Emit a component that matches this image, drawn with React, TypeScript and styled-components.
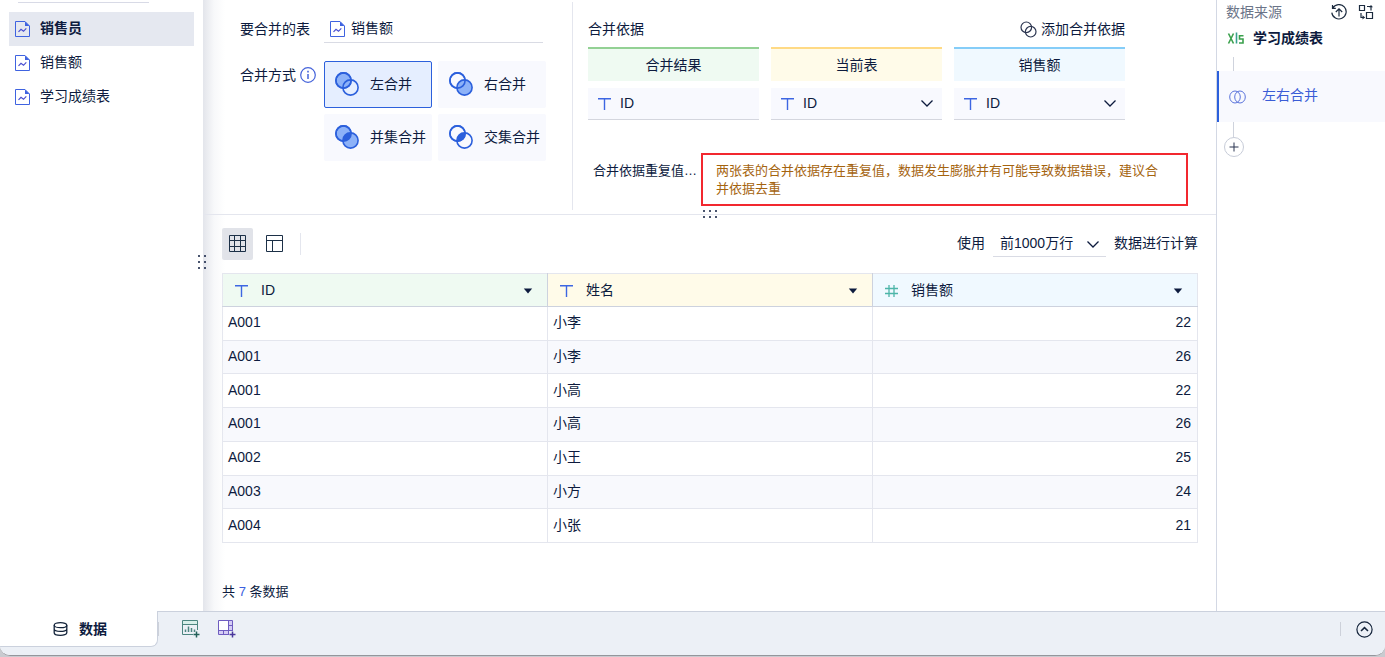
import React, { useState } from 'react';
import styled, { createGlobalStyle } from 'styled-components';

const color = {
  text: '#0d1b3e',
  muted: '#6b7488',
  line: '#e4e6ee',
  strongLine: '#cdd2de',
  primary: '#2c60dc',
  field: '#f8f9fe',
};

const GlobalStyle = createGlobalStyle`
  *, *::before, *::after { box-sizing: border-box; }
  body {
    margin: 0;
    background: #c9cbd0;
    color: ${color.text};
    font: 14px/20px "Liberation Sans", "Noto Sans CJK SC", sans-serif;
  }
  button, input, select { font: inherit; color: inherit; }
  button { border: 0; padding: 0; background: none; cursor: pointer; }
  svg { display: block; flex: none; }
`;

const Shell = styled.div`
  display: flex;
  flex-direction: column;
  min-height: calc(100vh - 1px);
  margin-bottom: 1px;
  border-bottom: 1px solid #94969c;
  border-radius: 0 0 10px 10px;
  background: #fff;
  overflow: hidden;
`;

const Workspace = styled.div`
  display: flex;
  flex: 1;
`;

const Sidebar = styled.nav`
  position: relative;
  flex: 0 0 203px;
  padding: 2px 9px 0;

  &::after {
    content: '';
    position: absolute;
    top: 0;
    bottom: 0;
    left: 100%;
    width: 22px;
    background: linear-gradient(to right, #e3e5eb, rgba(240, 242, 245, 0.5) 50%, rgba(255, 255, 255, 0));
    pointer-events: none;
  }
`;

const SidebarRule = styled.div`
  height: 1px;
  margin: 0 45px 9px 9px;
  background: #d8dae6;
`;

const TableItem = styled.button<{ $active?: boolean }>`
  display: flex;
  align-items: center;
  gap: 10px;
  width: 100%;
  max-width: 185px;
  height: 34px;
  padding: 0 6px 2px;
  background: ${p => (p.$active ? '#e5e8f0' : 'transparent')};
  font-weight: ${p => (p.$active ? 700 : 400)};

  svg { margin-top: 2px; }
`;

const Grip = styled.div<{ $columns: number }>`
  position: absolute;
  z-index: 2;
  display: grid;
  grid-template-columns: repeat(${p => p.$columns}, 2px);
  gap: 4px;

  i {
    width: 2px;
    height: 2px;
    border-radius: 1px;
    background: ${color.text};
  }
`;

const SideGrip = styled(Grip)`
  right: -3px;
  top: 255px;
`;

const BottomGrip = styled(Grip)`
  bottom: -4px;
  left: 50%;
  transform: translateX(-50%);
`;

const Main = styled.main`
  flex: 1;
  min-width: 0;
`;

const MergePanel = styled.section`
  position: relative;
  display: flex;
  border-bottom: 1px solid ${color.line};
`;

const ModePane = styled.div`
  display: grid;
  grid-template-columns: 78px 222px;
  column-gap: 6px;
  row-gap: 18px;
  align-content: start;
  flex: 0 0 370px;
  margin: 2px 0 4px;
  padding: 13px 0 0 37px;
  border-right: 1px solid ${color.line};
`;

const PaneLabel = styled.div`
  display: flex;
  align-items: center;
  gap: 4px;
  height: 27px;
`;

const TablePicker = styled.button`
  display: flex;
  align-items: center;
  gap: 6px;
  width: 219px;
  height: 28px;
  padding: 0 6px 1px;
  border-bottom: 1px solid #d9dbe4;

  svg { margin-top: 1px; }
`;

const ModeGrid = styled.div`
  display: grid;
  grid-template-columns: 108px 108px;
  gap: 6px;
`;

const ModeButton = styled.button<{ $active?: boolean }>`
  display: flex;
  align-items: center;
  gap: 10px;
  height: 47px;
  padding: 0 0 1px 9px;
  border: 1px solid ${p => (p.$active ? color.primary : color.field)};
  border-radius: 2px;
  background: ${p => (p.$active ? '#e5eeff' : color.field)};
  white-space: nowrap;
`;

const BasisPane = styled.div`
  flex: 1;
  min-width: 0;
  padding: 19px 28px 8px 15px;
`;

const BasisHead = styled.div`
  display: flex;
  justify-content: space-between;
  align-items: center;
  margin: 0 63px 8px 0;
`;

const AddButton = styled.button`
  display: flex;
  align-items: center;
  gap: 4px;
`;

const BasisGrid = styled.div`
  display: grid;
  grid-template-columns: repeat(3, minmax(0, 1fr));
  gap: 7px 12px;
  margin-right: 63px;
`;

const BasisTitle = styled.div<{ $bar: string; $fill: string }>`
  height: 34px;
  border-top: 2px solid ${p => p.$bar};
  background: ${p => p.$fill};
  line-height: 32px;
  text-align: center;
`;

const Field = styled.label`
  position: relative;
  display: flex;
  align-items: center;
  height: 32px;
  padding: 0 9px;
  border-bottom: 1px solid #d4d6de;
  background: ${color.field};

  input, select {
    flex: 1;
    min-width: 0;
    height: 31px;
    padding: 0 0 2px 8px;
    border: 0;
    outline: 0;
    background: none;
    appearance: none;
  }
`;

const Chevron = styled.svg`
  position: absolute;
  right: 8px;
  top: 50%;
  margin-top: -8px;
  pointer-events: none;
`;

const DuplicateRow = styled.div`
  display: flex;
  align-items: flex-start;
  gap: 4px;
  margin-top: 33px;
  padding-left: 5px;
  font-size: 13px;
  line-height: 18px;
`;

const DuplicateLabel = styled.div`
  flex: 0 0 104px;
  padding-top: 9px;
  white-space: nowrap;
`;

const Warning = styled.div`
  flex: 1;
  min-height: 53px;
  padding: 7px 20px 6px 13px;
  border: 2px solid #f2282f;
  color: #a5640f;
`;

const Preview = styled.section`
  padding: 13px 18px 9px 19px;
`;

const Toolbar = styled.div`
  display: flex;
  align-items: center;
  height: 32px;
  margin-bottom: 13px;
`;

const ViewButton = styled.button<{ $active?: boolean }>`
  display: grid;
  place-items: center;
  width: 31px;
  height: 32px;
  margin-right: 6px;
  padding-bottom: 2px;
  border-radius: 2px;
  background: ${p => (p.$active ? '#e1e3e9' : 'transparent')};
`;

const ToolbarRule = styled.div`
  width: 1px;
  height: 22px;
  margin-left: 4px;
  background: ${color.line};
`;

const Limit = styled.label`
  display: flex;
  align-items: center;
  gap: 8px;
  margin: 0 0 2px auto;
`;

const LimitSelect = styled.span`
  position: relative;
  width: 113px;
  height: 28px;
  border-bottom: 1px solid #d9dbe4;

  select {
    width: 100%;
    height: 27px;
    padding: 0 0 0 7px;
    border: 0;
    outline: 0;
    background: none;
    appearance: none;
  }

  svg {
    right: 6px;
    margin-top: -6px;
  }
`;

const DataTable = styled.table`
  width: 100%;
  height: 270px;
  border-collapse: collapse;
  table-layout: fixed;

  th, td {
    padding: 0 6px 2px 5px;
    border: 1px solid ${color.line};
  }
  th {
    height: 33px;
    padding: 0 14px 1px 11px;
    border-right-color: ${color.strongLine};
    border-bottom-color: ${color.strongLine};
    font-weight: 400;
  }
  th:last-child { border-right-color: ${color.line}; }
  tbody tr:nth-child(even) { background: #f8f9fd; }
`;

const HeadCell = styled.th<{ $fill: string }>`
  background: ${p => p.$fill};
`;

const HeadContent = styled.div`
  display: flex;
  align-items: center;
  gap: 12px;

  svg { margin-top: 2px; }
`;

const MenuButton = styled.button`
  margin-left: auto;
`;

const NumberCell = styled.td`
  text-align: right;
`;

const Count = styled.div`
  margin-top: 39px;
  font-size: 13px;
  b { color: #3c5fe0; font-weight: 400; }
`;

const Steps = styled.aside`
  flex: 0 0 169px;
  border-left: 1px solid #d3d8e4;
`;

const StepsHead = styled.div`
  display: flex;
  align-items: center;
  gap: 11px;
  padding: 2px 11px 0 9px;
  color: ${color.muted};

  span { flex: 1; }
`;

const Source = styled.div`
  display: flex;
  align-items: center;
  gap: 8px;
  margin: 6px 0 9px;
  padding-left: 10px;
  font-weight: 700;
`;

const Connector = styled.div`
  width: 1px;
  height: 15px;
  margin-left: 16px;
  background: #cfd3dd;
`;

const Step = styled.button`
  display: flex;
  align-items: center;
  gap: 16px;
  width: 100%;
  height: 51px;
  margin-top: -1px;
  padding: 0 0 3px 10px;
  border-left: 2px solid ${color.primary};
  background: ${color.field};
  color: #3a5cd6;

  svg { margin-top: 3px; }
`;

const AddStep = styled.button`
  display: grid;
  place-items: center;
  width: 20px;
  height: 20px;
  margin-left: 7px;
  border: 1px solid #c7ccd8;
  border-radius: 50%;
`;

const BottomBar = styled.footer`
  position: relative;
  display: flex;
  align-items: flex-start;
  height: 44px;
  background: #ecf0f6;
  box-shadow: inset 0 1px #cbd1dd;
`;

const DataTab = styled.button`
  display: flex;
  align-items: center;
  gap: 11px;
  width: 158px;
  height: 36px;
  padding: 0 0 0 53px;
  border: solid #cbd1dd;
  border-width: 0 1px 1px 0;
  border-radius: 0 0 7px 0;
  background: #fff;
  font-weight: 700;
`;

const BarRule = styled.div`
  width: 1px;
  height: 14px;
  margin-top: 11px;
  background: #cdd1da;
`;

const BarTools = styled.div`
  display: flex;
  gap: 18px;
  padding: 9px 0 0 23px;
`;

const BarEnd = styled.div`
  display: flex;
  gap: 15px;
  margin-left: auto;
  padding-right: 12px;

  button { margin: 10px 0 0; }
`;

const ReportIcon = () => (
  <svg width="15" height="16" viewBox="0 0 15 16" fill="none" stroke="#3f63e0">
    <path d="M.5.5H10L14.500 5V15.500H.5Z" />
    <path d="M10 .5V5H14.500Z" fill="#3f63e0" stroke="none" />
    <path d="M3.500 10.800 6 8.300 8.500 10.300 11.300 7.300" stroke="#4a4fd0" strokeWidth="1.200" />
  </svg>
);

const TextIcon = () => (
  <svg width="15" height="14" viewBox="0 0 15 14" fill="none" stroke="#3d66e2" strokeWidth="1.400">
    <path d="M1 1.800H14M7.500 2V13" />
  </svg>
);

const HashIcon = () => (
  <svg width="15" height="14" viewBox="0 0 15 14" fill="none" stroke="#4cb5a8" strokeWidth="1.300">
    <path d="M1 4.500H14M1 9.500H14M5 1V13M10 1V13" />
  </svg>
);

const ChevronIcon = () => (
  <Chevron width="14" height="14" viewBox="0 0 14 14" fill="none" stroke={color.text} strokeWidth="1.300">
    <path d="M1.500 4.500 7 10 12.500 4.500" />
  </Chevron>
);

type Mode = 'left' | 'right' | 'union' | 'inner';

const MergeIcon = ({ mode }: { mode: Mode }) => {
  const first = mode === 'left' || mode === 'union' ? '#8db2f8' : 'none';
  const second = mode === 'right' || mode === 'union' ? '#8db2f8' : 'none';
  const lens = mode === 'union' || mode === 'inner' ? '#2c60dc' : 'none';
  return (
    <svg width="26" height="26" viewBox="0 0 26 26" stroke="#2c60dc" strokeWidth="1.600">
      <circle cx="9.500" cy="9.500" r="7.600" fill={first} />
      <circle cx="16.500" cy="16.500" r="7.600" fill={second} />
      <path d="M17 9.000A7.600 7.600 0 0 1 9.000 17A7.600 7.600 0 0 1 17 9.000Z" fill={lens} stroke="none" />
      <circle cx="9.500" cy="9.500" r="7.600" fill="none" />
    </svg>
  );
};

const LinkIcon = () => (
  <svg width="17" height="17" viewBox="0 0 17 17" fill="none" stroke="#2b3550" strokeWidth="1.200">
    <circle cx="6.300" cy="6.300" r="5.300" />
    <circle cx="10.700" cy="10.700" r="5.300" />
  </svg>
);

const InfoIcon = () => (
  <svg width="16" height="16" viewBox="0 0 16 16" fill="none" stroke="#4563da" strokeWidth="1.200">
    <circle cx="8" cy="8" r="7.300" />
    <path d="M8 7V12" strokeWidth="1.500" />
    <path d="M8 3.800V5.400" strokeWidth="1.600" />
  </svg>
);

const GridIcon = () => (
  <svg width="17" height="17" viewBox="0 0 17 17" fill="none" stroke="#1c3047">
    <path d="M.5.5H16.500V16.500H.5ZM.5 5.500H16.500M.5 11.500H16.500M5.500.5V16.500M11.500.5V16.500" />
  </svg>
);

const LayoutIcon = () => (
  <svg width="17" height="17" viewBox="0 0 17 17" fill="none" stroke="#1c3047">
    <path d="M.5.5H16.500V16.500H.5ZM.5 5.500H16.500M6.500 5.500V16.500" />
  </svg>
);

const CaretIcon = () => (
  <svg width="10" height="6" viewBox="0 0 10 6" fill={color.text}>
    <path d="M.8.5H9.200L5 5.600Z" />
  </svg>
);

const HistoryIcon = () => (
  <svg width="16" height="16" viewBox="0 0 16 16" fill="none" stroke="#1c2b3f" strokeWidth="1.200">
    <path d="M1.500 1V4.300H4.800M1.700 4.200A7.200 7.200 0 1 1 .8 8.600" />
    <path d="M8 12.500V5M4.800 8 8 4.800 11.200 8" />
  </svg>
);

const SwapIcon = () => (
  <svg width="16" height="16" viewBox="0 0 16 16" fill="none" stroke="#1c2b3f" strokeWidth="1.200">
    <path d="M1.500 1.500H6.500V6.500H1.500ZM8.500 8.500H14.500V14.500H8.500Z" />
    <path d="M9 2.500H13V6.500M6.500 13.500H3V9" />
    <path d="M11 .5 9 2.500 11 4.500M4.500 11.500 6.500 13.500 4.500 15.500" strokeWidth="0" />
    <path d="M11 3.200 13 1 15 3.200ZM4.500 11.300 7 13.500 4.500 15.600Z" fill="#1c2b3f" stroke="none" />
  </svg>
);

const XlsIcon = () => (
  <svg width="18" height="14" viewBox="0 0 18 14" fill="none" strokeWidth="1.600">
    <path d="M1.500 2.500 6.500 12.500M6.500 2.500 1.500 12.500" stroke="#3aa04c" />
    <path d="M9.500 1.500V12.500" stroke="#39a08e" />
    <path d="M16.500 4.700H12.500V8H16V12H12" stroke="#3aa04c" />
  </svg>
);

const JoinIcon = () => (
  <svg width="17" height="14" viewBox="0 0 17 14" fill="none" stroke="#5b74dc">
    <ellipse cx="6" cy="7" rx="5.300" ry="6" />
    <ellipse cx="11" cy="7" rx="5.300" ry="6" />
  </svg>
);

const PlusIcon = () => (
  <svg width="10" height="10" viewBox="0 0 10 10" stroke="#2b3550">
    <path d="M.5 5H9.500M5 .5V9.500" />
  </svg>
);

const DatabaseIcon = () => (
  <svg width="15" height="14" viewBox="0 0 15 14" fill="none" stroke="#13233a" strokeWidth="1.300">
    <ellipse cx="7.500" cy="3.200" rx="6.300" ry="2.500" />
    <path d="M1.200 3.200V10.800C1.200 14.200 13.800 14.200 13.800 10.800V3.200M1.200 7C1.200 10.200 13.800 10.200 13.800 7" />
  </svg>
);

const AddChartIcon = () => (
  <svg width="18" height="18" viewBox="0 0 18 18" fill="none" stroke="#4c8580">
    <path d="M1 1H15V4H1Z" fill="#d8efea" stroke="none" />
    <path d="M11 14.500H.5V.5H15.500V10M.5 4.500H15.500" />
    <path d="M3.500 12V9.500M6.500 12V6.500M9.500 12V8M12.500 12V9.500" strokeWidth="1.500" />
    <path d="M11.500 14.500H17.500M14.500 11.500V17.500" stroke="#23605a" strokeWidth="1.500" />
  </svg>
);

const AddBoardIcon = () => (
  <svg width="18" height="18" viewBox="0 0 18 18" fill="none" stroke="#6e5cc0">
    <path d="M10 1H14V10H10ZM1 10H10V14H1Z" fill="#d5cdf5" stroke="none" />
    <path d="M1 1H10V10H1Z" fill="#fff" stroke="none" />
    <path d="M11 14.500H.5V.5H14.500V11M.5 10.500H14.500M10.500.5V14.500M10.500 5.500H14.500M5.500 10.500V14.500" />
    <path d="M11.500 14.500H17.500M14.500 11.500V17.500" stroke="#4a379c" strokeWidth="1.500" />
  </svg>
);

const CollapseIcon = () => (
  <svg width="17" height="17" viewBox="0 0 17 17" fill="none" stroke="#13233a" strokeWidth="1.200">
    <circle cx="8.500" cy="8.500" r="7.600" />
    <path d="M5 10 8.500 6.600 12 10" strokeWidth="1.500" />
  </svg>
);

const tables = ['销售员', '销售额', '学习成绩表'];

const modes: { id: Mode; label: string }[] = [
  { id: 'left', label: '左合并' },
  { id: 'right', label: '右合并' },
  { id: 'union', label: '并集合并' },
  { id: 'inner', label: '交集合并' },
];

const columns = [
  { title: 'ID', fill: '#effaf2', icon: <TextIcon /> },
  { title: '姓名', fill: '#fffbe9', icon: <TextIcon /> },
  { title: '销售额', fill: '#f0f9ff', icon: <HashIcon /> },
];

const rows: [string, string, number][] = [
  ['A001', '小李', 22],
  ['A001', '小李', 26],
  ['A001', '小高', 22],
  ['A001', '小高', 26],
  ['A002', '小王', 25],
  ['A003', '小方', 24],
  ['A004', '小张', 21],
];

const dots = Array.from({ length: 6 }, (_, i) => <i key={i} />);

export default function App() {
  const [table, setTable] = useState(tables[0]);
  const [mode, setMode] = useState<Mode>('left');

  return (
    <>
      <GlobalStyle />
      <Shell>
        <Workspace>
          <Sidebar>
            <SidebarRule />
            {tables.map(name => (
              <TableItem key={name} $active={name === table} onClick={() => setTable(name)}>
                <ReportIcon />
                {name}
              </TableItem>
            ))}
            <SideGrip $columns={2}>{dots}</SideGrip>
          </Sidebar>

          <Main>
            <MergePanel>
              <ModePane>
                <PaneLabel>要合并的表</PaneLabel>
                <TablePicker>
                  <ReportIcon />
                  销售额
                </TablePicker>
                <PaneLabel>
                  合并方式
                  <InfoIcon />
                </PaneLabel>
                <ModeGrid>
                  {modes.map(m => (
                    <ModeButton
                      key={m.id}
                      $active={m.id === mode}
                      aria-pressed={m.id === mode}
                      onClick={() => setMode(m.id)}
                    >
                      <MergeIcon mode={m.id} />
                      {m.label}
                    </ModeButton>
                  ))}
                </ModeGrid>
              </ModePane>

              <BasisPane>
                <BasisHead>
                  <span>合并依据</span>
                  <AddButton>
                    <LinkIcon />
                    添加合并依据
                  </AddButton>
                </BasisHead>
                <BasisGrid>
                  <BasisTitle $bar="#93d194" $fill="#effaf2">合并结果</BasisTitle>
                  <BasisTitle $bar="#ffda85" $fill="#fffbe9">当前表</BasisTitle>
                  <BasisTitle $bar="#85cdf8" $fill="#f0f9ff">销售额</BasisTitle>
                  <Field>
                    <TextIcon />
                    <input aria-label="合并结果" defaultValue="ID" />
                  </Field>
                  <Field>
                    <TextIcon />
                    <select aria-label="当前表">
                      <option>ID</option>
                    </select>
                    <ChevronIcon />
                  </Field>
                  <Field>
                    <TextIcon />
                    <select aria-label="销售额">
                      <option>ID</option>
                    </select>
                    <ChevronIcon />
                  </Field>
                </BasisGrid>
                <DuplicateRow>
                  <DuplicateLabel>合并依据重复值…</DuplicateLabel>
                  <Warning role="alert">
                    两张表的合并依据存在重复值，数据发生膨胀并有可能导致数据错误，建议合并依据去重
                  </Warning>
                </DuplicateRow>
              </BasisPane>
              <BottomGrip $columns={3}>{dots}</BottomGrip>
            </MergePanel>

            <Preview>
              <Toolbar>
                <ViewButton $active aria-label="表格"><GridIcon /></ViewButton>
                <ViewButton aria-label="布局"><LayoutIcon /></ViewButton>
                <ToolbarRule />
                <Limit>
                  使用
                  <LimitSelect>
                    <select>
                      <option>前1000万行</option>
                    </select>
                    <ChevronIcon />
                  </LimitSelect>
                  数据进行计算
                </Limit>
              </Toolbar>
              <DataTable>
                <thead>
                  <tr>
                    {columns.map(c => (
                      <HeadCell key={c.title} $fill={c.fill}>
                        <HeadContent>
                          {c.icon}
                          {c.title}
                          <MenuButton aria-label={c.title}><CaretIcon /></MenuButton>
                        </HeadContent>
                      </HeadCell>
                    ))}
                  </tr>
                </thead>
                <tbody>
                  {rows.map(([id, name, amount], i) => (
                    <tr key={i}>
                      <td>{id}</td>
                      <td>{name}</td>
                      <NumberCell>{amount}</NumberCell>
                    </tr>
                  ))}
                </tbody>
              </DataTable>
              <Count>共 <b>7</b> 条数据</Count>
            </Preview>
          </Main>

          <Steps>
            <StepsHead>
              <span>数据来源</span>
              <button aria-label="历史"><HistoryIcon /></button>
              <button aria-label="替换"><SwapIcon /></button>
            </StepsHead>
            <Source>
              <XlsIcon />
              学习成绩表
            </Source>
            <Connector />
            <Step>
              <JoinIcon />
              左右合并
            </Step>
            <Connector />
            <AddStep aria-label="添加步骤"><PlusIcon /></AddStep>
          </Steps>
        </Workspace>

        <BottomBar>
          <DataTab>
            <DatabaseIcon />
            数据
          </DataTab>
          <BarRule />
          <BarTools>
            <button aria-label="添加组件"><AddChartIcon /></button>
            <button aria-label="添加仪表板"><AddBoardIcon /></button>
          </BarTools>
          <BarEnd>
            <BarRule />
            <button aria-label="展开"><CollapseIcon /></button>
          </BarEnd>
        </BottomBar>
      </Shell>
    </>
  );
}
